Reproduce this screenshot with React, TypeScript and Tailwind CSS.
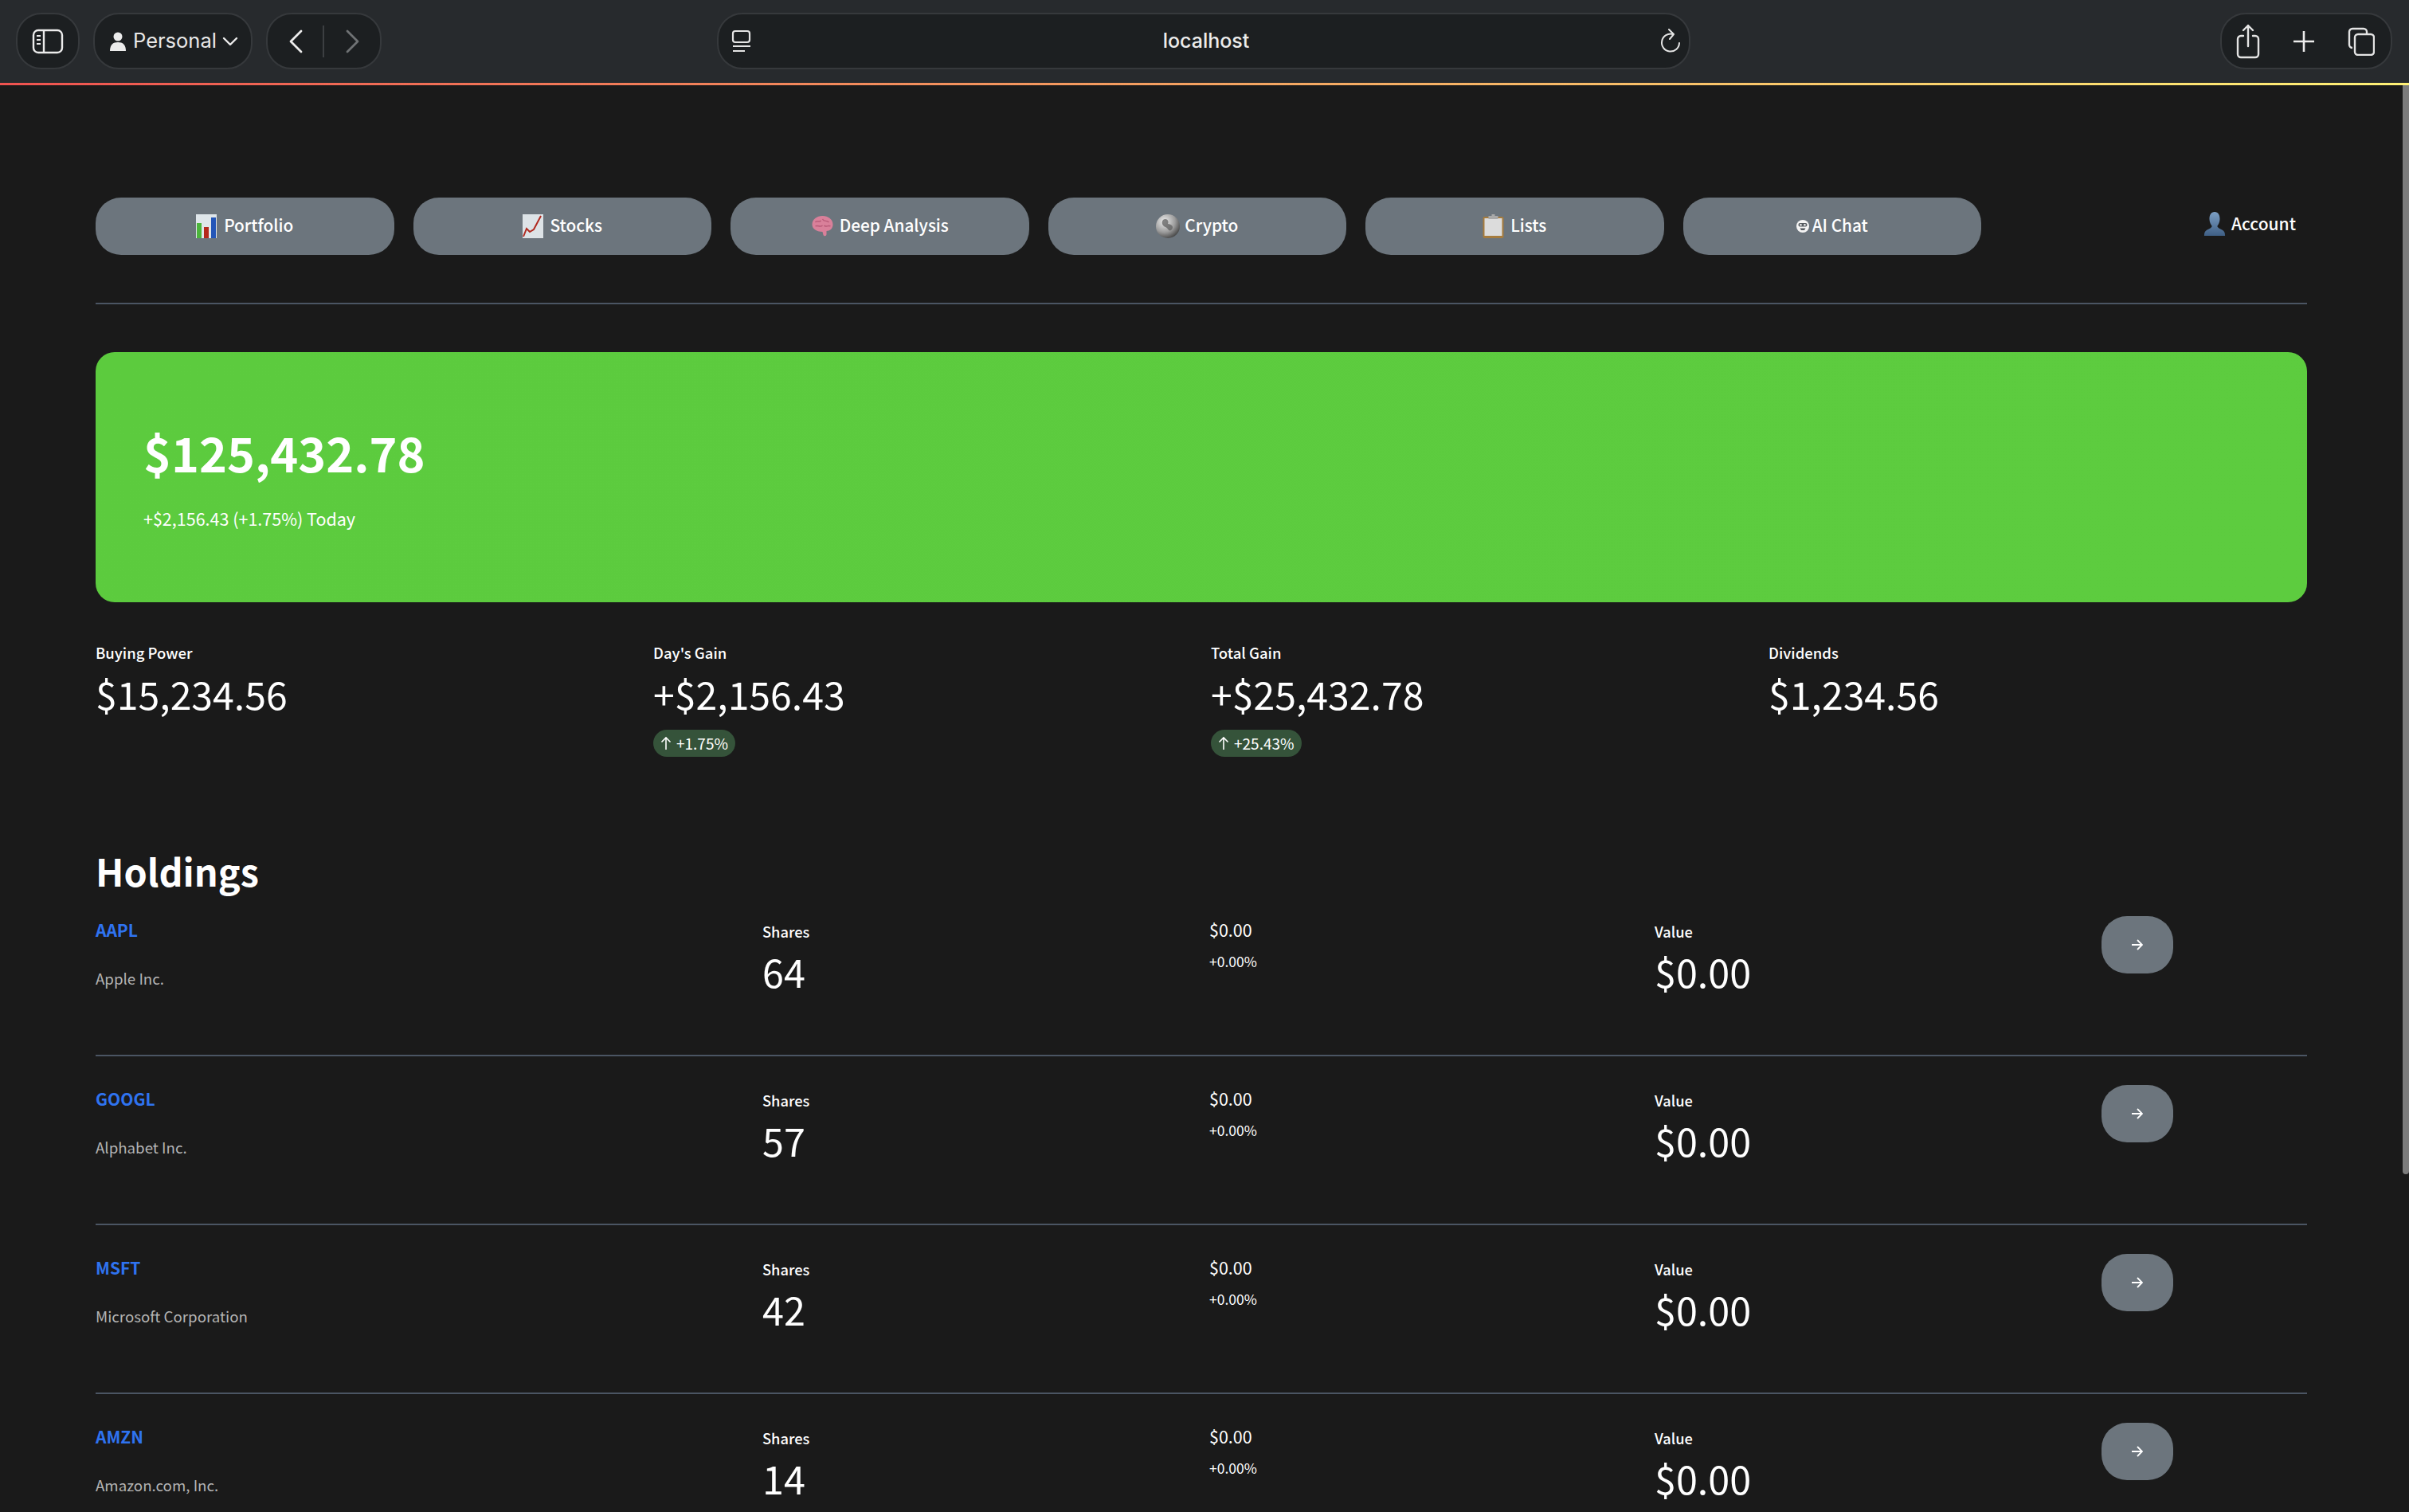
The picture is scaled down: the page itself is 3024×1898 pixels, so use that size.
import React from "react";

const src = { fontFamily: '"Noto Sans CJK SC", "Noto Sans", sans-serif' };

function BarsEmoji() {
  return (
    <svg width="26" height="30" viewBox="0 0 26 30" className="shrink-0">
      <rect width="26" height="30" fill="#dfe6ea" />
      <rect x="1" y="11" width="6" height="19" fill="#4cb53c" />
      <rect x="10" y="16" width="6" height="14" fill="#b5281c" />
      <rect x="19" y="4" width="6" height="26" fill="#2456b8" />
    </svg>
  );
}
function LineEmoji() {
  return (
    <svg width="26" height="30" viewBox="0 0 26 30" className="shrink-0">
      <rect width="26" height="30" fill="#dde3e7" />
      <path d="M1 28 L5 18 L9 22 L14 19 L23 2" fill="none" stroke="#b02a20" strokeWidth="2" />
    </svg>
  );
}
function BrainEmoji() {
  return (
    <svg width="29" height="26" viewBox="0 0 28 26" className="shrink-0">
      <path d="M1 11 C1 4 7 0 14 0 C21 0 27 4 27 11 C27 16 23 19 19 19 L19 23 C19 25.5 16 26 15 24 L14 20 C8 20 1 17 1 11 Z" fill="#d9809a" />
      <path d="M5 8 C7 5 10 9 12 6 M14 4 C16 8 19 5 22 8 M5 13 C8 11 11 15 14 12 M16 12 C18 15 21 11 24 13" fill="none" stroke="#b85a78" strokeWidth="1.4" />
    </svg>
  );
}
function GlobeEmoji() {
  return (
    <svg width="30" height="30" viewBox="0 0 30 30" className="shrink-0">
      <defs>
        <radialGradient id="g1" cx="35%" cy="30%" r="75%">
          <stop offset="0%" stopColor="#ececec" />
          <stop offset="60%" stopColor="#9c9c9c" />
          <stop offset="100%" stopColor="#454545" />
        </radialGradient>
      </defs>
      <circle cx="15" cy="15" r="15" fill="url(#g1)" />
      <path d="M9 7 C13 4 17 8 15 12 C19 12 24 16 19 20 C16 22 15 17 12 16 C9 15 6 11 9 7 Z" fill="#5f5f5f" opacity="0.75" />
    </svg>
  );
}
function ClipEmoji() {
  return (
    <svg width="27" height="30" viewBox="0 0 26 30" className="shrink-0">
      <rect x="0" y="3" width="26" height="27" rx="2" fill="#a67c3e" />
      <rect x="2" y="5" width="22" height="22" fill="#dcdcdc" />
      <rect x="7" y="2" width="12" height="4" fill="#a9a9a9" />
      <rect x="11" y="0" width="4" height="3" fill="#a9a9a9" />
    </svg>
  );
}
function BotEmoji() {
  return (
    <svg width="16" height="16" viewBox="0 0 16 16" className="shrink-0">
      <circle cx="8" cy="8" r="8" fill="#f4f4f4" />
      <rect x="2.5" y="4" width="11" height="4.5" rx="2" fill="#555b60" />
      <circle cx="5.5" cy="6.2" r="1.2" fill="#f4f4f4" />
      <circle cx="10.5" cy="6.2" r="1.2" fill="#f4f4f4" />
      <path d="M4.5 10.5 H11.5 L10 13 H6 Z" fill="#555b60" />
    </svg>
  );
}
function PersonEmoji() {
  return (
    <svg width="28" height="30" viewBox="0 0 30 30" preserveAspectRatio="none" className="shrink-0">
      <defs>
        <linearGradient id="g2" x1="0" y1="0" x2="0" y2="1">
          <stop offset="0%" stopColor="#7c9fc4" />
          <stop offset="100%" stopColor="#3f5f85" />
        </linearGradient>
      </defs>
      <path d="M15 0 C20 0 22 4 22 9 C22 13 20 16 18.5 18 C19 20 22 21 25 22.5 C28 24 29 26 29 30 L1 30 C1 26 2 24 5 22.5 C8 21 11 20 11.5 18 C10 16 8 13 8 9 C8 4 10 0 15 0 Z" fill="url(#g2)" />
    </svg>
  );
}

const navItems = [
  { label: "Portfolio", icon: <BarsEmoji />, gap: "gap-[9px]" },
  { label: "Stocks", icon: <LineEmoji />, gap: "gap-[9px]" },
  { label: "Deep Analysis", icon: <BrainEmoji />, gap: "gap-[7px]" },
  { label: "Crypto", icon: <GlobeEmoji />, gap: "gap-[6px]" },
  { label: "Lists", icon: <ClipEmoji />, gap: "gap-[8px]" },
  { label: "AI Chat", icon: <BotEmoji />, gap: "gap-[4px]" },
];

const holdings = [
  { sym: "AAPL", name: "Apple Inc.", shares: "64" },
  { sym: "GOOGL", name: "Alphabet Inc.", shares: "57" },
  { sym: "MSFT", name: "Microsoft Corporation", shares: "42" },
  { sym: "AMZN", name: "Amazon.com, Inc.", shares: "14" },
];

function Pill({ className, children }: { className: string; children?: React.ReactNode }) {
  return (
    <div className={"flex h-[71px] items-center rounded-[32px] border-2 border-[#36393c] bg-[#1c1f21] " + className}>
      {children}
    </div>
  );
}

function Toolbar() {
  return (
    <div className="flex h-[104px] items-start bg-[#272a2d] pt-[16px] pl-[20px] pr-[21px] text-[#e8e8e8]" style={{ fontFamily: "Inter, sans-serif" }}>
      <Pill className="w-[80px] justify-center">
        <svg width="40" height="32" viewBox="0 0 40 32" fill="none" stroke="#ececec" strokeWidth="2.4">
          <rect x="2" y="2" width="36" height="28" rx="6" />
          <path d="M15 2 V30" />
          <path d="M6 9 H11 M6 14 H11 M6 19 H11" strokeWidth="2" />
        </svg>
      </Pill>
      <Pill className="ml-[17px] w-[200px] pl-[18px]">
        <svg width="22" height="24" viewBox="0 0 22 24" fill="#ececec">
          <circle cx="11" cy="6" r="5.5" />
          <path d="M1 24 C1 16 5 13 11 13 C17 13 21 16 21 24 Z" />
        </svg>
        <span className="ml-[8px] text-[25.5px]">Personal</span>
        <svg className="ml-[7px]" width="20" height="12" viewBox="0 0 20 12" fill="none" stroke="#ececec" strokeWidth="2.4" strokeLinecap="round" strokeLinejoin="round">
          <path d="M2 2 L10 10 L18 2" />
        </svg>
      </Pill>
      <Pill className="ml-[17px] w-[145px] relative">
        <svg className="ml-[26px]" width="20" height="30" viewBox="0 0 20 30" fill="none" stroke="#ececec" strokeWidth="2.8" strokeLinecap="round" strokeLinejoin="round">
          <path d="M16 2 L3 15 L16 28" />
        </svg>
        <div className="ml-[23px] h-[40px] w-[2px] bg-[#3c3f42]" />
        <svg className="ml-[25px]" width="20" height="30" viewBox="0 0 20 30" fill="none" stroke="#6f7274" strokeWidth="2.8" strokeLinecap="round" strokeLinejoin="round">
          <path d="M4 2 L17 15 L4 28" />
        </svg>
      </Pill>
      <Pill className="ml-[421px] w-[1222px] pl-[16px] pr-[10px] justify-between">
        <svg width="26" height="30" viewBox="0 0 26 30" fill="none" stroke="#e4e4e4" strokeWidth="2.2">
          <rect x="2" y="2" width="21" height="14" rx="3" />
          <path d="M2 21 H24 M2 27 H17" />
        </svg>
        <span className="text-[25px] font-medium text-[#ececec]">localhost</span>
        <svg width="26" height="32" viewBox="0 0 26 32" fill="none" stroke="#e4e4e4" strokeWidth="2" strokeLinecap="round" strokeLinejoin="round">
          <path d="M16 7 A11 11 0 1 0 24 18" />
          <path d="M11 1 L17 7 L12 13" />
        </svg>
      </Pill>
      <Pill className="ml-auto w-[216px] justify-between pl-[18px] pr-[20px]">
        <svg width="30" height="44" viewBox="0 0 30 44" fill="none" stroke="#e4e4e4" strokeWidth="2.4" strokeLinecap="round" strokeLinejoin="round">
          <path d="M9 15 H6 A4 4 0 0 0 2 19 V38 A4 4 0 0 0 6 42 H24 A4 4 0 0 0 28 38 V19 A4 4 0 0 0 24 15 H21" />
          <path d="M15 28 V2 M9 8 L15 2 L21 8" />
        </svg>
        <svg width="28" height="28" viewBox="0 0 28 28" fill="none" stroke="#ececec" strokeWidth="2.6">
          <path d="M14 1 V27 M1 14 H27" />
        </svg>
        <svg width="34" height="36" viewBox="0 0 34 36" fill="none" stroke="#e4e4e4" strokeWidth="2.4">
          <path d="M6 26 A4 4 0 0 1 2 22 V6 A4 4 0 0 1 6 2 H20 A4 4 0 0 1 24 6 V9" />
          <rect x="9" y="9" width="24" height="26" rx="4" />
        </svg>
      </Pill>
    </div>
  );
}

function Stat({ label, value, badge }: { label: string; value: string; badge?: string }) {
  return (
    <div>
      <div className="text-[18.5px] leading-[30px] font-medium">{label}</div>
      <div className="mt-[3px] text-[48.2px] leading-[66px]">{value}</div>
      {badge && (
        <div className="mt-[13px] inline-flex h-[34px] items-center gap-[6px] rounded-[17px] bg-[#35533a] px-[9px] text-[19px]">
          <svg width="14" height="18" viewBox="0 0 14 18" fill="none" stroke="#fff" strokeWidth="1.6">
            <path d="M7 17 V2 M1.5 7.5 L7 2 L12.5 7.5" />
          </svg>
          {badge}
        </div>
      )}
    </div>
  );
}

export default function App() {
  return (
    <div className="flex h-[1898px] w-[3024px] flex-col overflow-hidden bg-[#1a1a1a] text-white" style={src}>
      <Toolbar />
      <div className="h-[3px] bg-[linear-gradient(90deg,#ef5350,#f4a261_50%,#fff176)]" />
      <div className="flex min-h-0 flex-1">
        <main className="min-w-0 flex-1 px-[120px] pt-[141px]">
          <nav className="flex h-[72px] items-center gap-[24px]">
            {navItems.map((n) => (
              <div key={n.label} className={"flex h-[72px] w-[374.5px] items-center justify-center rounded-[32px] bg-[#6c757d] text-[20.8px] font-medium " + n.gap}>
                {n.icon}
                <span className="-translate-y-[1px]">{n.label}</span>
              </div>
            ))}
            <div className="ml-auto mr-[14px] flex -translate-y-[3px] items-center gap-[7px] text-[21px] font-medium">
              <PersonEmoji />
              <span>Account</span>
            </div>
          </nav>
          <div className="mt-[60px] h-[2px] bg-[#4b5563]" />
          <section className="mt-[60px] h-[314px] rounded-[24px] bg-[linear-gradient(135deg,#5ccb3e,#5dcc3f)] pl-[60px] pt-[80px]">
            <div className="text-[59.3px] leading-[90px] font-bold">$125,432.78</div>
            <div className="mt-[23px] text-[21.5px] leading-[32px]">+$2,156.43 (+1.75%) Today</div>
          </section>
          <section className="mt-[48px] grid grid-cols-4 gap-[24px]">
            <Stat label="Buying Power" value="$15,234.56" />
            <Stat label="Day's Gain" value="+$2,156.43" badge="+1.75%" />
            <Stat label="Total Gain" value="+$25,432.78" badge="+25.43%" />
            <Stat label="Dividends" value="$1,234.56" />
          </section>
          <h2 className="mt-[121px] text-[46.8px] leading-[43px] font-bold">Holdings</h2>
          <div>
            {holdings.map((h) => (
              <div key={h.sym} className="grid h-[212px] grid-cols-[837px_561px_559px_561px_258px] border-b-2 border-[#4b5563] pt-[36px]">
                <div>
                  <div className="text-[21px] leading-[34px] font-bold text-[#2f73f0]">{h.sym}</div>
                  <div className="mt-[29px] text-[18.7px] leading-[30px] text-[#b4b4b4]">{h.name}</div>
                </div>
                <div>
                  <div className="mt-[4px] text-[18.3px] leading-[30px] font-medium">Shares</div>
                  <div className="text-[48.5px] leading-[70px]">{h.shares}</div>
                </div>
                <div>
                  <div className="mt-[1px] text-[21.5px] leading-[32px]">$0.00</div>
                  <div className="mt-[10px] text-[17.5px] leading-[28px]">+0.00%</div>
                </div>
                <div>
                  <div className="mt-[4px] text-[18.3px] leading-[30px] font-medium">Value</div>
                  <div className="text-[48.5px] leading-[70px]">$0.00</div>
                </div>
                <div>
                  <div className="flex h-[72px] w-[90px] items-center justify-center rounded-[32px] bg-[#6c757d]">
                    <svg width="14" height="14" viewBox="0 0 14 14" fill="none" stroke="#fff" strokeWidth="1.8">
                      <path d="M0 7 H12 M7 1 L13 7 L7 13" />
                    </svg>
                  </div>
                </div>
              </div>
            ))}
          </div>
        </main>
        <div className="w-[8px] shrink-0">
          <div className="h-[1367px] rounded-b-[4px] bg-[#7c7c7c]" />
        </div>
      </div>
    </div>
  );
}
